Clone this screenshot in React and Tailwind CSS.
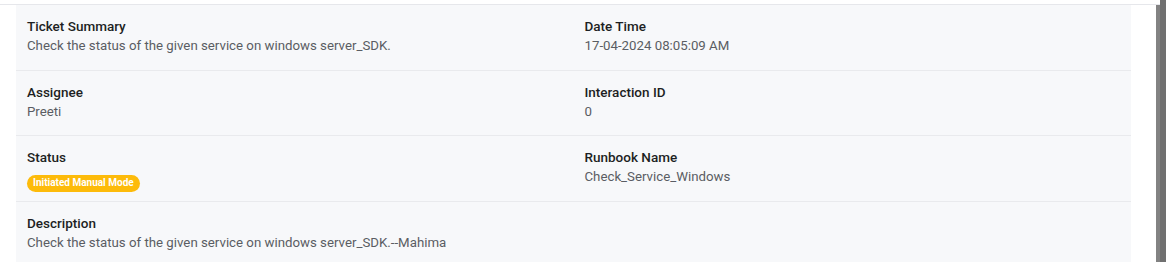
import React from 'react';

// Ticket detail fields, two per row
const rows = [
  [
    { label: 'Ticket Summary', value: 'Check the status of the given service on windows server_SDK.' },
    { label: 'Date Time', value: '17-04-2024 08:05:09 AM' }
  ],
  [
    { label: 'Assignee', value: 'Preeti' },
    { label: 'Interaction ID', value: '0' }
  ],
  [
    { label: 'Status', badge: 'Initiated Manual Mode' },
    { label: 'Runbook Name', value: 'Check_Service_Windows' }
  ],
  [
    { label: 'Description', value: 'Check the status of the given service on windows server_SDK.--Mahima' },
    null
  ]
];

const rowHeights = ['h-[66px]', 'h-[65px]', 'h-[66px]', 'h-[60px]'];

const Field = ({ item }) => {
  if (!item) return <div />;
  return (
    <div className="px-[11px] pt-[12px]">
      <div className="text-[13.5px] leading-[19px] font-medium text-[#1d1f23]">{item.label}</div>
      {item.badge ? (
        <div className="pt-[2px]">
          <span className="inline-flex items-center h-[17px] px-[6px] rounded-full bg-[#fdbb0a] text-white text-[10px] font-bold leading-none">
            {item.badge}
          </span>
        </div>
      ) : (
        <div className="text-[13.25px] leading-[20px] text-[#5a5d63]">{item.value}</div>
      )}
    </div>
  );
};

export default function App() {
  return (
    <div className="flex w-[1166px] h-[262px] bg-white overflow-hidden" style={{ fontFamily: 'Roboto, "Noto Sans", sans-serif' }}>
      <div className="flex flex-col w-[1160px]">
        {/* Top strip */}
        <div className="h-[6px] bg-white border-b border-[#e6e7eb]" />
        <div className="flex flex-1">
          <div className="ml-[16px] w-[1115px] bg-[#f7f8fa]">
            {rows.map((row, i) => (
              <div
                key={i}
                className={`grid grid-cols-2 ${rowHeights[i]} ${i < rows.length - 1 ? 'border-b border-[#e9eaed]' : ''}`}
              >
                <Field item={row[0]} />
                <Field item={row[1]} />
              </div>
            ))}
          </div>
          <div className="flex-1 bg-white" />
          <div className="w-[4px] bg-[#828282]" />
        </div>
      </div>
      {/* Scrollbar */}
      <div className="w-[6px] bg-[#707070]" />
    </div>
  );
}
